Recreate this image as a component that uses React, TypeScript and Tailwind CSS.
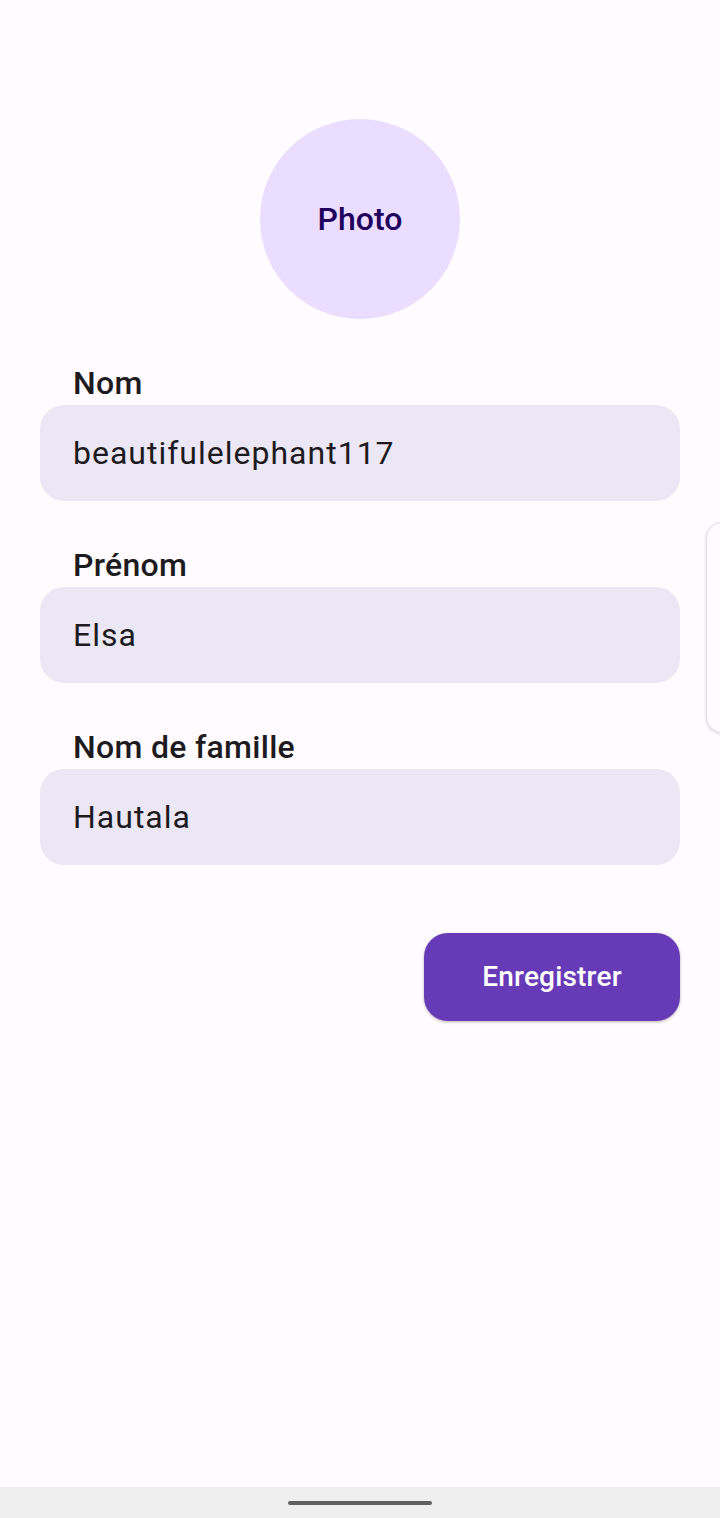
const fields = [
  { id: 1, label: "Nom", value: "beautifulelephant117" },
  { id: 2, label: "Prénom", value: "Elsa" },
  { id: 3, label: "Nom de famille", value: "Hautala" },
];

const App = () => {
  return (
    <div className="relative h-[1518px] w-[720px] overflow-hidden bg-[#fffbfe] font-['Roboto',sans-serif] flex flex-col">
      <div className="flex-1 px-10 pt-[119px]">
        <div className="flex justify-center">
          <div className="flex h-[200px] w-[200px] items-center justify-center rounded-full bg-[#eaddff]">
            <span className="text-[32px] font-medium text-[#21005d]">Photo</span>
          </div>
        </div>
        <div className="mt-[46px] flex flex-col gap-[46px]">
          {fields.map(({ id, label, value }) => (
            <div key={id} className="flex flex-col gap-[4px]">
              <label className="pl-[33px] text-[32px] leading-[36px] font-medium tracking-[0.3px] text-[#1d1b20]">
                {label}
              </label>
              <div className="flex h-[96px] items-center rounded-[24px] bg-[#ece7f4] px-[33px] text-[32px] tracking-[1px] text-[#1d1b20]">
                {value}
              </div>
            </div>
          ))}
        </div>
        <div className="mt-[68px] flex justify-end">
          <button className="h-[88px] w-[256px] rounded-[24px] bg-[#673ab7] text-[28px] font-medium tracking-[0.2px] text-white shadow-[0_1px_3px_rgba(0,0,0,0.3)]">
            Enregistrer
          </button>
        </div>
      </div>

      {/* side sheet peeking in from the right */}
      <div className="absolute left-[706px] top-[522px] h-[211px] w-[40px] rounded-[16px] border border-[#e4e0e6] bg-[#fffbfe] shadow-[0_1px_3px_rgba(0,0,0,0.15)]" />

      <div className="flex h-[31px] items-center justify-center bg-[#efefef]">
        <div className="h-[4px] w-[144px] rounded-full bg-[#606060]" />
      </div>
    </div>
  );
};

export default App;
